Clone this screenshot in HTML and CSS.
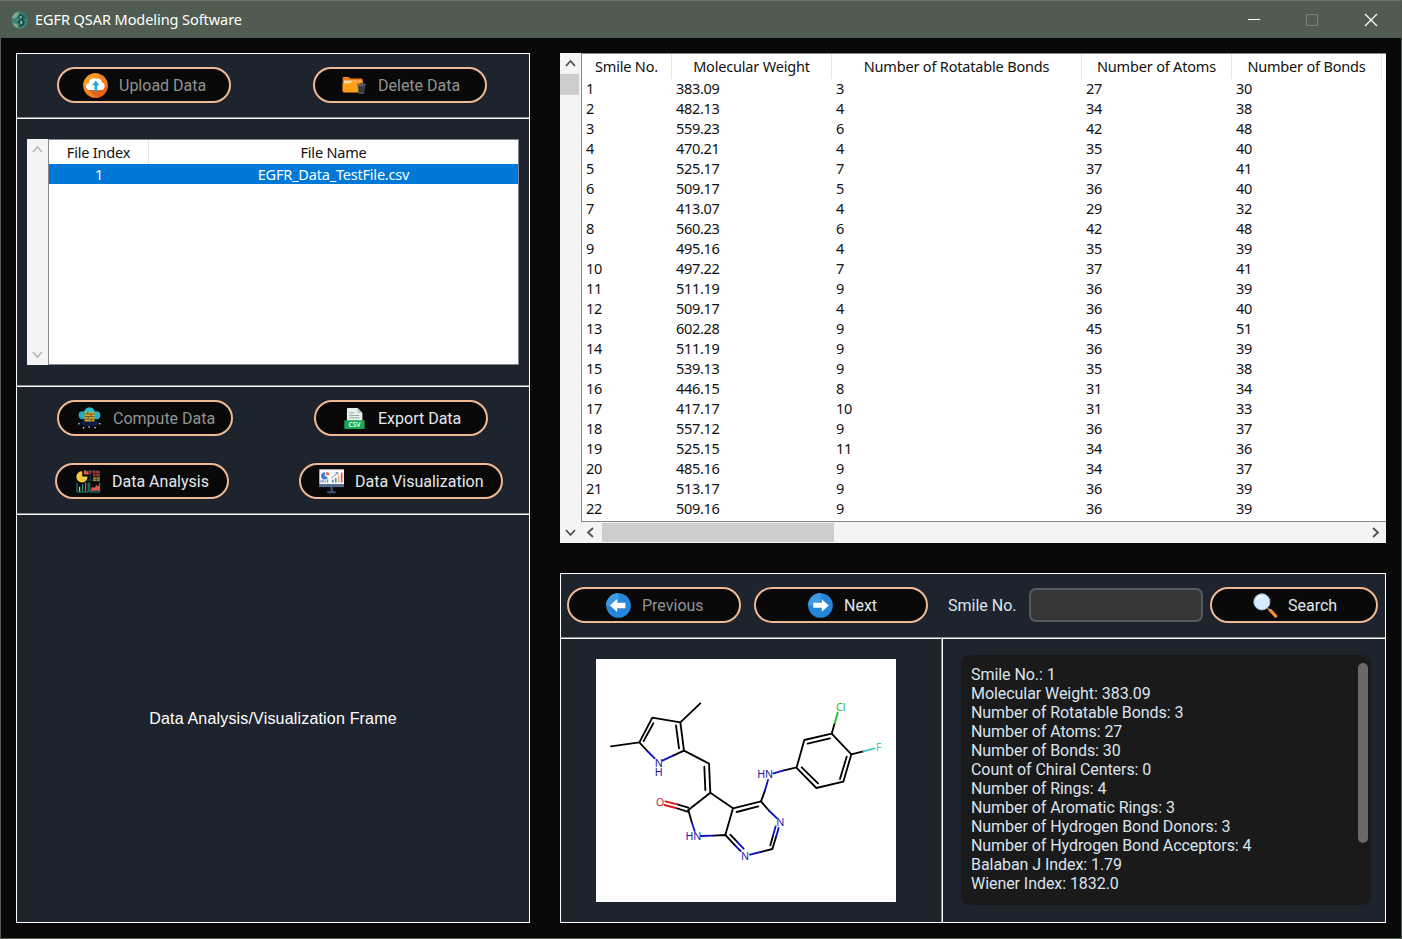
FILE: index.html
```html
<!DOCTYPE html>
<html lang="en">
<head>
<meta charset="utf-8">
<title>EGFR QSAR Modeling Software</title>
<link rel="stylesheet" href="styles.css">
</head>
<body>
<div class="window">
  <header class="titlebar">
    <svg class="app-icon" viewBox="0 0 17 18"><ellipse cx="8.500" cy="9" rx="8.200" ry="8.800" fill="#3f8577"/><path d="M1 6 4 2l4-1-1 4-4 3zM2 12l4 1 1 4-4-2z" fill="#86a989"/><path d="M9 1l5 3 2 4-3 1-2-4-3-1z" fill="#2f6b62"/><path d="M8 4h3l2 3-1 2 2 2-2 4-4 1 1-3-3-2 3-2-2-3z" fill="#12483f"/><path d="M8.500 5h2l.5 2-2 1zM9 10l2-.5.5 3-2 1z" fill="#74c0a6"/></svg>
    <span class="title">EGFR QSAR Modeling Software</span>
    <svg class="controls" viewBox="0 0 130 20" fill="none"><path d="M4 9.500h12" stroke="#fff"/><path d="M62.500 4.500h11v11h-11z" stroke="#78827a"/><path d="m121 4 12 12m0-12-12 12" stroke="#fff" stroke-width="1.200"/></svg>
  </header>

  <main class="content">
    <section class="left">
      <div class="pane toolbar">
        <button class="btn upload off"><svg class="ico" viewBox="248 219 76 76"><circle cx="286" cy="257" r="37.500" fill="#f58220"/><path d="M249 257a37 37 0 0 1 50-35l-12 30z" fill="#fb9b24"/><path d="m263 268 25 26a37 37 0 0 0 34-30l-10-12z" fill="#e5641a"/><path d="M268 271c-14 0-15-19-3-21 2-14 15-18 24-13 8-4 17 3 16 11 13 2 12 23-2 23z" fill="#fff"/><path d="M283 275v-19h-7l11-14 11 14h-7v19z" fill="#27a9df"/></svg><span>Upload Data</span></button>
        <button class="btn delete off"><svg class="ico" viewBox="156 68 76 76"><path d="M158 82q0-2 3-2h15q3 0 5 5h34q4 0 4 5v32h-61z" fill="#f47b16"/><path d="M162 91h52v12h-52z" fill="#ffe1b0"/><path d="M158 99h22l7-6h30q3 0 3 3v27q0 4-4 4h-54q-4 0-4-4z" fill="#ff9f19"/><path d="M204 105h22l-2 25q0 2-3 2h-12q-3 0-3-2z" fill="#46484a"/><path d="M202 101h26v5h-26zM210 98h10v3h-10z" fill="#5f6061"/><path d="M210 110v16m5-16v16m5-16v16" stroke="#292b2c" stroke-width="2"/></svg><span>Delete Data</span></button>
      </div>
      <div class="pane files">
        <div class="vbar idle"><svg viewBox="0 0 21 21"><path d="m6 13 4.500-5 4.500 5"/></svg><svg viewBox="0 0 21 21"><path d="m6 8 4.500 5L15 8"/></svg></div>
        <div class="filetable">
          <div class="frow fhead"><span>File Index</span><span>File Name</span></div>
          <div class="frow selected"><span>1</span><span class="fname">EGFR_Data_TestFile.csv</span></div>
        </div>
      </div>
      <div class="pane actions">
        <div class="line">
          <button class="btn compute off"><svg class="ico" viewBox="231 229 76 76"><circle cx="269" cy="250" r="17" fill="#28bfd0"/><circle cx="248" cy="257" r="12" fill="#20aebf"/><circle cx="290" cy="257" r="12" fill="#23b4c8"/><path d="M248 258h42v11h-42z" fill="#23b4c8"/><path d="m240 282 8-8h43l8 8-14 8h-31z" fill="#101c48"/><path d="M254 247h30v29h-30z" fill="#d5a42d"/><path d="M254 253h30M254 261h30M254 269h30M264 247v6m10 0v8m-9 0v8m10 0v7" stroke="#57502b" stroke-width="2.500"/><g fill="#dcebf5"><circle cx="237" cy="283" r="2.500"/><circle cx="251" cy="295" r="2.500"/><circle cx="268" cy="293" r="2.500"/><circle cx="286" cy="295" r="2.500"/><circle cx="300" cy="283" r="2.500"/></g></svg><span>Compute Data</span></button>
          <button class="btn export"><svg class="ico" viewBox="186 78 76 76"><path d="M203 84h30l15 15v25h-47V87q0-3 2-3z" fill="#e7f0eb"/><path d="m233 84 15 15h-13q-2 0-2-3z" fill="#b8cdc1"/><path d="M208 99h15m-15 8h31m-31 7h31" stroke="#92afa0" stroke-width="3"/><rect x="193" y="121" width="62" height="27" rx="3" fill="#19a654"/><text x="224" y="142" class="csv">CSV</text></svg><span>Export Data</span></button>
        </div>
        <div class="line second">
          <button class="btn analysis"><svg class="ico" viewBox="228 418 76 76"><path d="M247 425v16h16a17 17 0 1 1-16-16z" fill="#f4c942"/><path d="M252 421a18 18 0 0 1 16 14h-16z" fill="#d85a48"/><path d="M271 424v28m-14 0h42V424h-42" fill="none" stroke="#246c61" stroke-width="2"/><path d="M279 423h20v17h-20zM266 423h9v9h-9z" fill="#9b3938"/><path d="M279 432h20m-11-9v17" stroke="#241d1d" stroke-width="2"/><path d="M280 443h20v12h-20z" fill="#a18c42"/><path d="M280 449h20m-10-6v12" stroke="#35331f" stroke-width="2"/><path d="M231 459v29h34v-29m5 0v29h30v-29" fill="none" stroke="#2a9184" stroke-width="3"/><path d="M239 472v14" stroke="#f4c942" stroke-width="4"/><path d="M248 464v22" stroke="#3293a0" stroke-width="4"/><path d="M257 459v27" stroke="#d85a48" stroke-width="4"/><path d="m272 483 6-11 6 4 6-10 4 5 6-7v20h-28z" fill="#db5b49"/></svg><span>Data Analysis</span></button>
          <button class="btn visual"><svg class="ico" viewBox="116 266 76 76"><path d="M117 267h75v46h-75z" fill="#f7f8fc"/><path d="M116 313h76v8h-76z" fill="#526a91"/><path d="M151 321h7v13h9v6h-26v-6h10z" fill="#3c4e73"/><path d="M134 276v11l9 5a11 11 0 1 1-9-16z" fill="#3e82d2"/><path d="M137 275a11 11 0 0 1 11 10h-11z" fill="#ef6b50"/><path d="M122 307v-7m6 7v-9m7 9v-6m7 6v-10" stroke="#7a8fb0" stroke-width="4"/><path d="M158 307v-8m9 8v-14" stroke="#4b8cd2" stroke-width="5"/><path d="M176 307v-21" stroke="#f4af57" stroke-width="5"/><path d="M185 307v-30" stroke="#e65349" stroke-width="5"/><path d="m154 293 17-14m-5-1 7-2-1 7" fill="none" stroke="#64799d" stroke-width="2.500"/></svg><span>Data Visualization</span></button>
        </div>
      </div>
      <div class="pane frame"><span>Data Analysis/Visualization Frame</span></div>
    </section>

    <section class="right">
      <div class="data">
        <div class="vbar"><svg viewBox="0 0 21 21"><path d="m6 13 4.500-5 4.500 5"/></svg><i class="thumb"></i><svg viewBox="0 0 21 21"><path d="m6 8 4.500 5L15 8"/></svg></div>
        <div class="datamain">
          <div class="grid">
            <div class="row head"><span>Smile No.</span><span>Molecular Weight</span><span>Number of Rotatable Bonds</span><span>Number of Atoms</span><span>Number of Bonds</span></div>
            <div class="row"><span>1</span><span>383.09</span><span>3</span><span>27</span><span>30</span></div>
            <div class="row"><span>2</span><span>482.13</span><span>4</span><span>34</span><span>38</span></div>
            <div class="row"><span>3</span><span>559.23</span><span>6</span><span>42</span><span>48</span></div>
            <div class="row"><span>4</span><span>470.21</span><span>4</span><span>35</span><span>40</span></div>
            <div class="row"><span>5</span><span>525.17</span><span>7</span><span>37</span><span>41</span></div>
            <div class="row"><span>6</span><span>509.17</span><span>5</span><span>36</span><span>40</span></div>
            <div class="row"><span>7</span><span>413.07</span><span>4</span><span>29</span><span>32</span></div>
            <div class="row"><span>8</span><span>560.23</span><span>6</span><span>42</span><span>48</span></div>
            <div class="row"><span>9</span><span>495.16</span><span>4</span><span>35</span><span>39</span></div>
            <div class="row"><span>10</span><span>497.22</span><span>7</span><span>37</span><span>41</span></div>
            <div class="row"><span>11</span><span>511.19</span><span>9</span><span>36</span><span>39</span></div>
            <div class="row"><span>12</span><span>509.17</span><span>4</span><span>36</span><span>40</span></div>
            <div class="row"><span>13</span><span>602.28</span><span>9</span><span>45</span><span>51</span></div>
            <div class="row"><span>14</span><span>511.19</span><span>9</span><span>36</span><span>39</span></div>
            <div class="row"><span>15</span><span>539.13</span><span>9</span><span>35</span><span>38</span></div>
            <div class="row"><span>16</span><span>446.15</span><span>8</span><span>31</span><span>34</span></div>
            <div class="row"><span>17</span><span>417.17</span><span>10</span><span>31</span><span>33</span></div>
            <div class="row"><span>18</span><span>557.12</span><span>9</span><span>36</span><span>37</span></div>
            <div class="row"><span>19</span><span>525.15</span><span>11</span><span>34</span><span>36</span></div>
            <div class="row"><span>20</span><span>485.16</span><span>9</span><span>34</span><span>37</span></div>
            <div class="row"><span>21</span><span>513.17</span><span>9</span><span>36</span><span>39</span></div>
            <div class="row"><span>22</span><span>509.16</span><span>9</span><span>36</span><span>39</span></div>
          </div>
          <div class="hbar"><svg viewBox="0 0 21 21"><path d="M12 6l-5 4.500 5 4.500"/></svg><i class="thumb"></i><svg viewBox="0 0 21 21"><path d="m8 6 5 4.500L8 15"/></svg></div>
        </div>
      </div>

      <div class="viewer">
        <div class="nav">
          <button class="btn prev off"><svg class="ico" viewBox="168 279 76 76"><circle cx="206" cy="317" r="37.500" fill="#2587dc"/><path d="M168 317a38 38 0 0 1 38-38v38z" fill="#3c9ae6"/><path d="m180 317 22-20v12h25v16h-25v12z" fill="#fff"/></svg><span>Previous</span></button>
          <button class="btn next"><svg class="ico" viewBox="204 69 76 76"><circle cx="242" cy="107" r="37.500" fill="#2587dc"/><path d="M204 107a38 38 0 0 1 38-38v38z" fill="#3c9ae6"/><path d="m267 107-21-19v11h-26v15h26v12z" fill="#fff"/></svg><span>Next</span></button>
          <label class="lab" for="smile">Smile No.</label>
          <input class="field" id="smile">
          <button class="btn search"><svg class="ico" viewBox="340 280 76 76"><path d="m384 326 9 9" stroke="#7a8795" stroke-width="5"/><path d="m393 333 16 17" stroke="#f18b37" stroke-width="10" stroke-linecap="round"/><circle cx="367" cy="307" r="24.500" fill="#d5ebff" stroke="#9fbddb" stroke-width="3"/><path d="M352 300q5-10 16-9" stroke="#fff" stroke-width="5" fill="none"/></svg><span>Search</span></button>
        </div>
        <div class="lower">
          <div class="molbox">
            <svg class="mol" viewBox="18 27 900 729">
              <g class="b">
                <path d="M331 160 271 217 187 203 148 277 63 289"/><path d="m190 220-29 53"/>
                <path d="m271 217 11 85 75 39 4 87-66 52"/><path d="m258 226 9 69M343 350l3 70"/>
                <path d="m148 277 24 26M282 302l-33 15"/>
                <path d="m361 428 68 47-23 80M429 475l84-21 25 29M440 486l65-17"/>
                <path d="m295 480 10 36M370 557l36-2 29 31M421 554l20 21"/>
                <path d="m295 473-33-10M292 485l-34-11"/>
                <path d="m513 454 12-33M582 361l38-9 23-82 82-19 59 62-24 82-81 19-60-61M653 281l67-16M770 320l-20 67M635 352l49 48"/>
                <path d="m725 251 9-31M784 313l36-9M512 606l35-9 12-39M541 586l8-29"/>
              </g>
              <g class="b blue"><path d="m172 303 22 22M249 317l-32 15M305 516l9 27M333 558l37-1M435 586l17 17M441 575l20 21M512 606l-32 8M559 558l7-24M549 557l8-28M538 483l22 21M525 421l9-31M550 370l32-9"/></g>
              <g class="b red"><path d="m262 463-36-9M258 474l-35-9"/></g>
              <path class="b green" d="m734 220 9-32"/><path class="b cyan" d="m820 304 34-9"/>
              <g class="atom"><text x="206" y="351">N<tspan x="206" y="378">H</tspan></text><text x="525" y="384">HN</text><text x="310" y="570">HN</text><text x="465" y="629">N</text><text x="571" y="528">N</text></g>
              <text class="atom redt" x="210" y="467">O</text><text class="atom greent" x="752" y="183">Cl</text><text class="atom cyant" x="865" y="304">F</text>
            </svg>
          </div>
          <div class="infobox">
            <div class="info">
              <div class="props">
                <div>Smile No.: 1</div><div>Molecular Weight: 383.09</div><div>Number of Rotatable Bonds: 3</div><div>Number of Atoms: 27</div><div>Number of Bonds: 30</div><div>Count of Chiral Centers: 0</div><div>Number of Rings: 4</div><div>Number of Aromatic Rings: 3</div><div>Number of Hydrogen Bond Donors: 3</div><div>Number of Hydrogen Bond Acceptors: 4</div><div>Balaban J Index: 1.79</div><div>Wiener Index: 1832.0</div>
              </div>
              <i class="scroll"></i>
            </div>
          </div>
        </div>
      </div>
    </section>
  </main>
</div>
</body>
</html>
```

FILE: styles.css
```css
* { box-sizing: border-box; }
body { margin: 0; background: #090909; font-family: Roboto, sans-serif; font-size: 16px; }
.window { width: 1402px; height: 939px; border: 1px solid #525a54; border-top-color: #68776a; background: #090909; overflow: hidden; }
.titlebar { height: 37px; background: #505c50; display: flex; align-items: center; padding-left: 10px; color: #fff; font: 14.500px "Noto Sans", sans-serif; }
.app-icon { width: 17px; height: 18px; margin-right: 7px; }
.title { letter-spacing: -0.070px; flex: 1; white-space: nowrap; padding-bottom: 2px; }
.controls { width: 130px; height: 20px; margin-right: 27px; overflow: visible; }
.content { display: flex; gap: 30px; padding: 15px 15px 0; }

.left { width: 514px; height: 870px; border: 1px solid #fff; background: #1e242d; display: flex; flex-direction: column; }
.pane + .pane { border-top: 1px solid #8d9093; box-shadow: inset 0 1px #fff; }
.toolbar { height: 63px; display: flex; padding: 13px 0 0 40px; gap: 82px; }
.btn { height: 36px; border: 2px solid #efb992; border-radius: 18px; background: #090909; color: #e3e7ec; font: 16px Roboto, sans-serif; display: flex; align-items: center; gap: 11px; padding: 0 0 0 24px; width: 174px; white-space: nowrap; flex: none; }
.btn.off { color: #929292; }
.ico { width: 25px; height: 25px; flex: none; }
.delete { padding-left: 27px; }
.compute { width: 176px; padding-left: 18px; }
.export { padding-left: 26px; }
.analysis { padding-left: 19px; }
.visual { width: 204px; padding-left: 18px; }
.csv { font: bold 20px "Noto Sans", sans-serif; fill: #d5ffe1; text-anchor: middle; }

.files { height: 268px; display: flex; padding: 21px 10px 0; }
.vbar { width: 21px; background: #f4f4f4; display: flex; flex-direction: column; flex: none; }
.vbar svg, .hbar svg { width: 21px; height: 21px; flex: none; fill: none; stroke: #505050; stroke-width: 1.800; }
.vbar svg:last-child { margin-top: auto; }
.idle { height: 226px; }
.idle svg { stroke: #b8b8b8; }
.filetable { width: 471px; height: 226px; background: #fff; border: 1px solid #828790; font: 14.500px "Noto Sans", sans-serif; letter-spacing: -0.200px; color: #111; }
.frow { display: grid; grid-template-columns: 100px 1fr; height: 20px; line-height: 21px; text-align: center; }
.fhead { height: 24px; line-height: 25px; }
.fhead span { height: 24px; }
.fhead span:first-child { border-right: 1px solid #e5e5e5; }
.selected { background: #0078d7; color: #fff; }

.actions { height: 128px; padding: 14px 0 0 40px; }
.line { display: flex; gap: 81px; }
.second { margin: 27px 0 0 -2px; gap: 70px; }
.frame { flex: 1; display: flex; align-items: center; justify-content: center; color: #fff; font: 16px "Liberation Sans", Arial, sans-serif; letter-spacing: 0.180px; padding-top: 2px; }

.right { width: 826px; }
.data { display: flex; height: 490px; background: #f4f4f4; }
.vbar .thumb { height: 21px; margin-right: 2px; background: #cdcdcd; }
.datamain { width: 805px; }
.grid { height: 469px; background: #fff; border: 1px solid #828790; border-right: 0; color: #111; font: 14.500px "Noto Sans", sans-serif; letter-spacing: -0.300px; }
.row { display: grid; grid-template-columns: 90px 160px 250px 150px 150px; height: 20px; line-height: 18px; }
.row span { padding-left: 4px; }
.head { height: 25px; line-height: 24px; letter-spacing: -0.180px; }
.head span { height: 25px; padding: 0; text-align: center; border-right: 1px solid #e5e5e5; }
.hbar { height: 21px; display: flex; }
.hbar .thumb { width: 232px; height: 19px; margin-top: 1px; background: #cdcdcd; }
.hbar svg:last-child { margin-left: auto; }

.viewer { margin-top: 30px; height: 350px; border: 1px solid #fff; background: #1e242d; display: flex; flex-direction: column; }
.nav { height: 63px; display: flex; padding: 13px 0 0 6px; color: #dce4ee; }
.prev { padding-left: 37px; margin-right: 13px; }
.next { padding-left: 52px; }
.lab { margin-left: 20px; width: 81px; line-height: 37px; }
.field { width: 174px; height: 34px; margin: 1px 7px 0 0; border: 2px solid #565b5e; border-radius: 7px; background: #343638; padding: 0 8px; color: #fff; }
.search { width: 168px; padding-left: 41px; gap: 10px; }
.lower { flex: 1; display: flex; border-top: 1px solid #8d9093; box-shadow: inset 0 1px #fff; }
.molbox { width: 382px; border-right: 1px solid #fff; box-shadow: inset -1px 0 #8d9093; padding: 21px 0 0 35px; }
.mol { display: block; width: 300px; height: 243px; background: #fff; }
.b { fill: none; stroke: #000; stroke-width: 5.500; stroke-linecap: round; stroke-linejoin: round; }
.blue { stroke: #1111b5; }
.red { stroke: #d51b1b; }
.green { stroke: #19c519; }
.cyan { stroke: #42c7d2; }
.atom { font: 32px "Noto Sans", sans-serif; text-anchor: middle; fill: #1717ad; letter-spacing: -0.500px; }
.redt { fill: #d51b1b; }
.greent { fill: #19b919; }
.cyant { fill: #42bfc8; }
.infobox { padding: 17px 0 0 18px; }
.info { width: 410px; height: 250px; border-radius: 9px; background: #1a1a1a; color: #dce4ee; display: flex; justify-content: space-between; padding: 8px 3px 0 10px; }
.props { padding-top: 2px; line-height: 19px; letter-spacing: -0.060px; }
.scroll { width: 10px; height: 180px; border-radius: 5px; background: #696969; }
```
